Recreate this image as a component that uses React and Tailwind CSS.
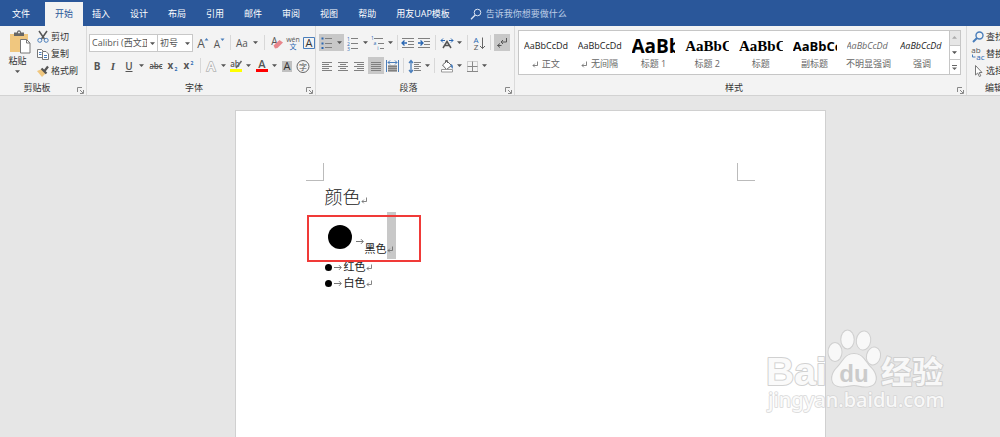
import React from "react";

const TABS = ["插入", "设计", "布局", "引用", "邮件", "审阅", "视图", "帮助", "用友UAP模板"];

const STYLES = [
  { name: "正文", mark: true, sample: "text-[9px] text-[#222]" },
  { name: "无间隔", mark: true, sample: "text-[9px] text-[#222]" },
  { name: "标题 1", sample: "text-[19px] font-bold text-black" },
  { name: "标题 2", sample: "text-[15px] font-bold text-black font-['Liberation_Serif',serif]" },
  { name: "标题", sample: "text-[15px] font-bold text-black font-['Liberation_Serif',serif]" },
  { name: "副标题", sample: "text-[13px] font-bold text-black" },
  { name: "不明显强调", sample: "text-[9px] italic text-[#666]" },
  { name: "强调", sample: "text-[9px] italic text-[#222]" },
];

function Caret({ className = "" }) {
  return (
    <svg viewBox="0 0 9 9" className={`w-[9px] h-[9px] shrink-0 ${className}`}>
      <path d="M2 3.300h5L4.500 6z" fill="#555" />
    </svg>
  );
}

function Icon({ children }) {
  return (
    <svg viewBox="0 0 16 16" className="w-4 h-4 shrink-0" fill="none">
      {children}
    </svg>
  );
}

function Tool({ label, caret, active, className = "", children }) {
  return (
    <button
      aria-label={label}
      className={`flex items-center h-[17px] shrink-0 ${active ? "bg-[#c8c8c8]" : ""} ${className}`}
    >
      <Icon>{children}</Icon>
      {caret && <Caret />}
    </button>
  );
}

function Sep({ className = "" }) {
  return <span className={`w-px h-[15px] bg-[#d8d8d8] shrink-0 ${className}`} />;
}

function Launcher() {
  return (
    <svg viewBox="0 0 7 7" className="w-[7px] h-[7px]" fill="none" stroke="#888">
      <path d="M.5 5V.5H5M3 3l3 3M6.5 3v3.5H3" />
    </svg>
  );
}

function Group({ title, launcher, className = "", titleClass = "", children }) {
  return (
    <section className={`flex flex-col h-[69px] border-r border-[#dadada] ${className}`}>
      <div className="flex-1">{children}</div>
      <div className="relative h-3 mb-px leading-3 text-center text-[#333]">
        <span className={titleClass}>{title}</span>
        {launcher && (
          <button aria-label={`${title}选项`} className="absolute right-[2px] bottom-0">
            <Launcher />
          </button>
        )}
      </div>
    </section>
  );
}

// horizontal rules, each one as [x1, x2, y]
function Rules({ rows, color = "#808080" }) {
  return <path d={rows.map(([a, b, y]) => `M${a} ${y}H${b}`).join("")} stroke={color} />;
}

function Letter({ x = 8, y = 12, size = 12, fill = "#555", children, ...rest }) {
  return (
    <text x={x} y={y} fontSize={size} fill={fill} textAnchor="middle" {...rest}>
      {children}
    </text>
  );
}

function TopTabs() {
  return (
    <header className="flex items-end h-[26px] bg-[#2a579a] text-white overflow-hidden">
      <button className="w-11 h-6 pr-[2px] shrink-0">文件</button>
      <button className="h-6 px-[10px] mx-px -mr-px shrink-0 bg-[#f3f3f3] text-[#2a579a]">开始</button>
      {TABS.map((tab) => (
        <button key={tab} className="h-6 px-[10px] shrink-0">
          {tab}
        </button>
      ))}
      <label className="flex items-center flex-1 h-6 gap-1 pl-[10px]">
        <svg viewBox="0 0 12 12" className="w-3 h-3 shrink-0" fill="none" stroke="#dbe4f2">
          <circle cx="7.500" cy="4.500" r="3.300" />
          <path d="M5.200 7L1 11.200" strokeWidth="1.300" />
        </svg>
        <input
          aria-label="告诉我你想要做什么"
          placeholder="告诉我你想要做什么"
          className="flex-1 min-w-0 bg-transparent outline-none placeholder:text-[#bdcde6]"
        />
      </label>
    </header>
  );
}

function Clipboard() {
  return (
    <Group title="剪贴板" launcher titleClass="pr-5" className="w-[87px] shrink-0 pl-2">
      <div className="flex pt-[2px]">
        <button className="flex flex-col items-center w-[23px] mt-px mr-1">
          <svg viewBox="0 0 23 25" className="w-[23px] h-[25px]" fill="none">
            <path d="M2 5h18v18H2z" fill="#f0c77f" />
            <path d="M6 3.500h3c0-3 4-3 4 0h3V7H6z" fill="#666" />
            <path d="M10.200 2.800h1.600v1.400h-1.600z" fill="#fff" />
            <path d="M12.500 10.500h6l3.500 3.500v10h-9.500z" fill="#fff" stroke="#777" />
            <path d="M18.500 10.500V14h3.500" stroke="#777" />
          </svg>
          <span className="mt-px mr-1 leading-3">粘贴</span>
          <Caret className="mr-1" />
        </button>
        <div className="flex flex-col">
          <button className="flex items-center h-[17px]">
            <Icon>
              <path d="M4 2l5.500 8M12 2L6.500 10" stroke="#555" strokeWidth="1.500" />
              <circle cx="4.800" cy="11.300" r="2" stroke="#4a7ebb" />
              <circle cx="11.200" cy="11.300" r="2" stroke="#4a7ebb" />
            </Icon>
            剪切
          </button>
          <button className="flex items-center h-[17px]">
            <Icon>
              <path d="M2.500 3.500h4l2 2v6h-6z" fill="#fff" stroke="#777" />
              <path d="M7.500 5.500h3.500l2.500 2.500v5.500h-6z" fill="#fff" stroke="#777" />
              <path d="M4 6.500h2.500M4 8.500h2.500M9 9.500h3M9 11.500h3" stroke="#4a7ebb" />
            </Icon>
            复制
          </button>
          <button className="flex items-center h-[17px]">
            <Icon>
              <path d="M2 8l5-2 4 4-4 4z" fill="#f0c77f" />
              <path d="M6.500 5.500l5 5M9.500 8L13 3.500" stroke="#555" strokeWidth="2.200" />
            </Icon>
            格式刷
          </button>
        </div>
      </div>
    </Group>
  );
}

function Combo({ label, value, className }) {
  return (
    <div className={`relative h-[18px] border border-[#c8c8c8] bg-white ${className}`}>
      <select
        aria-label={label}
        className="block w-full h-4 pl-[2px] pr-[10px] overflow-hidden appearance-none outline-none whitespace-nowrap text-[#555]"
      >
        <option>{value}</option>
      </select>
      <Caret className="absolute right-0 top-1 pointer-events-none" />
    </div>
  );
}

function FontGroup() {
  return (
    <Group title="字体" launcher titleClass="pr-4" className="w-[229px] shrink-0 pl-[2px]">
      <div className="flex items-center h-[17px] mt-2">
        <Combo label="字体" value="Calibri (西文正文)" className="w-[69px] shrink-0" />
        <Combo label="字号" value="初号" className="w-9 -ml-px mr-px shrink-0" />
        <Tool label="增大字号">
          <Letter x={7} y={13} size={12}>A</Letter>
          <path d="M10.500 5.500L12.500 3l2 2.500z" fill="#4a7ebb" />
        </Tool>
        <Tool label="减小字号">
          <Letter x={7} y={13} size={10}>A</Letter>
          <path d="M10.500 3.500h4l-2 2.500z" fill="#4a7ebb" />
        </Tool>
        <Sep className="mx-1" />
        <Tool label="更改大小写" caret>
          <Letter x={7} y={12} size={10}>Aa</Letter>
        </Tool>
        <Sep className="mx-1" />
        <Tool label="清除格式">
          <Letter x={5.500} y={10} size={10}>A</Letter>
          <path d="M4.500 10.500l6-5.500 3.500 2.500-5.500 5.500-2.500.500z" fill="#e8868c" />
        </Tool>
        <Tool label="拼音指南">
          <Letter y={7} size={7}>wén</Letter>
          <Letter y={14} size={7} fill="#2a67b2">文</Letter>
        </Tool>
        <Tool label="字符边框">
          <path d="M2.500 2.500h11v11h-11z" stroke="#4a7ebb" />
          <Letter y={12} size={11} fill="#333">A</Letter>
        </Tool>
      </div>
      <div className="flex items-center h-[17px] mt-[6px]">
        <Tool label="加粗">
          <Letter y={11.500} size={10} fontWeight="700">B</Letter>
        </Tool>
        <Tool label="倾斜">
          <Letter y={11.500} size={11} fontStyle="italic" fontWeight="600" fontFamily="Liberation Serif">I</Letter>
        </Tool>
        <Tool label="下划线" caret>
          <Letter y={11.500} size={10} fontWeight="600">U</Letter>
          <path d="M4.500 13.500h7" stroke="#555" />
        </Tool>
        <Tool label="删除线" className="ml-[2px]">
          <Letter y={11} size={8} fontWeight="600">abc</Letter>
          <path d="M2 8.500h12" stroke="#555" />
        </Tool>
        <Tool label="下标">
          <Letter x={6.500} y={11} size={10} fontWeight="700">x</Letter>
          <Letter x={12} y={13} size={5} fill="#2a67b2" fontWeight="700">2</Letter>
        </Tool>
        <Tool label="上标">
          <Letter x={6.500} y={11} size={10} fontWeight="700">x</Letter>
          <Letter x={12} y={7} size={5} fill="#2a67b2" fontWeight="700">2</Letter>
        </Tool>
        <Sep className="ml-1 mr-[2px]" />
        <Tool label="文本效果" caret>
          <text x="8" y="13" fontSize="13" textAnchor="middle" fill="#f8f8f8" stroke="#b4b4b4" strokeWidth="1.600" paintOrder="stroke" fontWeight="600">
            A
          </text>
        </Tool>
        <Tool label="突出显示" caret>
          <Letter x={7} y={9} size={8} fontWeight="600">ab</Letter>
          <path d="M13.500 3L8 10" stroke="#666" strokeWidth="1.500" />
          <path d="M2 11h12v3H2z" fill="#ff0" />
        </Tool>
        <Tool label="字体颜色" caret className="ml-px">
          <Letter y={10} size={11} fontWeight="600">A</Letter>
          <path d="M2 11h12v3H2z" fill="#f00" />
        </Tool>
        <Tool label="字符底纹">
          <path d="M3 3h10v11H3z" fill="#c0c0c0" />
          <Letter y={12} size={11} fill="#333">A</Letter>
        </Tool>
        <Tool label="带圈字符">
          <circle cx="8" cy="8.500" r="6" stroke="#666" />
          <Letter y={11.500} size={8}>字</Letter>
        </Tool>
      </div>
    </Group>
  );
}

function ParagraphGroup() {
  return (
    <Group title="段落" launcher titleClass="pr-4" className="w-[199px] shrink-0 pl-[3px]">
      <div className="flex items-center h-[17px] mt-2">
        <Tool label="项目符号" caret active>
          <path d="M2.500 2.500h2v2h-2zM2.500 7.500h2v2h-2zM2.500 12h2v2h-2z" fill="#2a67b2" />
          <Rules rows={[[6, 13, 3.5], [6, 13, 8.5], [6, 13, 12.5]]} />
        </Tool>
        <Tool label="编号" caret className="ml-px">
          <Letter x={3.500} y={5.500} size={5} fill="#2a67b2">1</Letter>
          <Letter x={3.500} y={10.500} size={5} fill="#2a67b2">2</Letter>
          <Letter x={3.500} y={15.500} size={5} fill="#2a67b2">3</Letter>
          <Rules rows={[[6, 13, 3.5], [6, 13, 8.5], [6, 13, 13.5]]} />
        </Tool>
        <Tool label="多级列表" caret>
          <Letter x={2.500} y={5} size={5} fill="#2a67b2">1</Letter>
          <Letter x={5} y={10} size={5} fill="#2a67b2">a</Letter>
          <Letter x={8} y={15} size={5} fill="#2a67b2">i</Letter>
          <Rules rows={[[4, 13, 3.5], [8, 14, 8.5], [10, 14, 13.5]]} />
        </Tool>
        <Sep className="mx-[2px]" />
        <Tool label="减少缩进量">
          <Rules rows={[[2, 14, 3.5], [8, 14, 6.5], [8, 14, 9.5], [2, 14, 12.5]]} />
          <path d="M7 8H2.500M4.500 5.500L2 8l2.500 2.500" stroke="#2a67b2" strokeWidth="1.300" />
        </Tool>
        <Tool label="增加缩进量">
          <Rules rows={[[2, 14, 3.5], [8, 14, 6.5], [8, 14, 9.5], [2, 14, 12.5]]} />
          <path d="M2 8h4.500M4.500 5.500L7 8l-2.500 2.500" stroke="#2a67b2" strokeWidth="1.300" />
        </Tool>
        <Sep className="mx-[3px]" />
        <Tool label="中文版式" caret>
          <path d="M4 13l4-6.500 4 6.500M5.500 10.500h5" stroke="#555" strokeWidth="1.500" />
          <path d="M2 5.500h4M4 3.500L2 5.500l2 2M10 5.500h4M12 3.500l2 2-2 2" stroke="#2a67b2" />
        </Tool>
        <Sep className="mx-[3px]" />
        <Tool label="排序">
          <Letter x={5} y={8} size={8} fill="#2a67b2">A</Letter>
          <Letter x={5} y={15} size={8}>Z</Letter>
          <path d="M11.500 2.500v11M9 11l2.500 2.500L14 11" stroke="#666" />
        </Tool>
        <Sep className="mx-[3px]" />
        <Tool label="显示编辑标记" active>
          <path d="M12.500 3v4H7M9 5L7 7l2 2M3.500 10.500h4M6 8.500l-2.500 2 2.500 2" stroke="#555" />
        </Tool>
      </div>
      <div className="flex items-center h-[17px] mt-[6px]">
        <Tool label="左对齐">
          <Rules rows={[[3, 13, 4.5], [3, 10, 6.5], [3, 13, 8.5], [3, 10, 10.5], [3, 13, 12.5]]} />
        </Tool>
        <Tool label="居中">
          <Rules rows={[[3, 13, 4.5], [5, 11, 6.5], [3, 13, 8.5], [5, 11, 10.5], [3, 13, 12.5]]} />
        </Tool>
        <Tool label="右对齐">
          <Rules rows={[[3, 13, 4.5], [6, 13, 6.5], [3, 13, 8.5], [6, 13, 10.5], [3, 13, 12.5]]} />
        </Tool>
        <Tool label="两端对齐" active className="ml-px">
          <Rules rows={[[3, 13, 4.5], [3, 13, 6.5], [3, 13, 8.5], [3, 13, 10.5], [3, 13, 12.5]]} />
        </Tool>
        <Tool label="分散对齐">
          <path d="M4 7h9v7H4z" fill="#aaa" />
          <Rules rows={[[4, 13, 8.5], [4, 13, 10.5], [4, 13, 12.5]]} />
          <path d="M2.500 2v12M14.500 2v12M4 4.500h9M6 2.500l-2 2 2 2M11 2.500l2 2-2 2" stroke="#4a7ebb" />
        </Tool>
        <Sep className="mx-[3px]" />
        <Tool label="行距" caret>
          <path d="M4 3v11M2 5l2-2.500L6 5M2 12l2 2.500L6 12" stroke="#4a7ebb" strokeWidth="1.300" />
          <Rules rows={[[7, 14, 4.5], [7, 12, 6.5], [7, 14, 8.5], [7, 12, 10.5], [7, 14, 12.5]]} />
        </Tool>
        <Sep className="ml-[2px] mr-1" />
        <Tool label="底纹" caret>
          <path d="M3.500 7l4.500-4 4.500 4.500-5 4z" fill="#fff" stroke="#666" />
          <path d="M6.500 5V2.500h2V5" stroke="#666" />
          <path d="M12 6c2 1 2.500 2.500 1.500 5L11.500 8z" fill="#4a7ebb" />
          <path d="M2.500 11.500h11v2.500h-11z" fill="#fff" stroke="#999" />
        </Tool>
        <Tool label="边框" caret>
          <path d="M3.500 3.500h10v10h-10z" stroke="#aaa" strokeDasharray="1 1" />
          <path d="M3.500 8.500h10M8.500 3.500v10M3 13.500h11" stroke="#888" />
        </Tool>
      </div>
    </Group>
  );
}

function StylesGroup() {
  return (
    <Group title="样式" launcher titleClass="pr-4" className="flex-1 min-w-0 pl-[3px]">
      <div className="flex h-[45px] mt-1 mr-[5px] border border-[#c6c6c6] bg-white">
        <div className="grid flex-1 min-w-0 grid-cols-8">
          {STYLES.map((s) => (
            <button key={s.name} className="flex flex-col min-w-0 px-[5px] pt-1 text-left">
              <span className={`block w-full h-[22px] overflow-hidden leading-[22px] whitespace-nowrap ${s.sample}`}>
                AaBbCcDd
              </span>
              <span className="flex items-center self-center h-3 gap-1 mt-px leading-3 whitespace-nowrap text-[#666]">
                {s.mark && <ReturnMark />}
                {s.name}
              </span>
            </button>
          ))}
        </div>
        <div className="flex flex-col w-[11px] border-l border-[#c6c6c6]">
          <button aria-label="上一行" className="flex items-center flex-1 bg-[#e6e6e6]">
            <Caret className="rotate-180 opacity-40" />
          </button>
          <button aria-label="下一行" className="flex items-center flex-1 border-[#c6c6c6] border-y">
            <Caret />
          </button>
          <button aria-label="其他" className="flex items-center flex-1">
            <svg viewBox="0 0 9 9" className="w-[9px] h-[9px]">
              <path d="M2 2h5v1H2zM2 4.500h5L4.500 7z" fill="#666" />
            </svg>
          </button>
        </div>
      </div>
    </Group>
  );
}

function EditingGroup() {
  return (
    <div className="w-[33px] shrink-0 overflow-hidden">
      <Group title="编辑" className="w-[52px] pl-[3px]">
        <div className="flex flex-col pt-[2px]">
          <button className="flex items-center h-[17px] whitespace-nowrap">
            <Icon>
              <circle cx="9.500" cy="6.500" r="3.500" stroke="#4a7ebb" strokeWidth="1.400" />
              <path d="M7 9l-4 4" stroke="#4a7ebb" strokeWidth="2" />
            </Icon>
            查找
          </button>
          <button className="flex items-center h-[17px] whitespace-nowrap">
            <Icon>
              <Letter x={6} y={7} size={8}>ab</Letter>
              <Letter x={10.500} y={14} size={8} fill="#2a67b2">ac</Letter>
              <path d="M2.500 8.500v2.500h3" stroke="#4a7ebb" />
            </Icon>
            替换
          </button>
          <button className="flex items-center h-[17px] whitespace-nowrap">
            <Icon>
              <path d="M5.500 2.500v9.500l2.200-2 1.600 3.500 1.500-.700-1.600-3.300h2.800z" fill="#fff" stroke="#777" />
            </Icon>
            选择
          </button>
        </div>
      </Group>
    </div>
  );
}

function ReturnMark() {
  return (
    <svg viewBox="0 0 6 7" className="w-[6px] h-[7px] shrink-0" fill="none" stroke="#666" strokeWidth=".8">
      <path d="M5.500.500V4.500H1M2.800 2.700L1 4.500l1.800 1.800" />
    </svg>
  );
}

function TabMark({ className = "" }) {
  return (
    <svg viewBox="0 0 8 7" className={`w-2 h-[7px] shrink-0 ${className}`} fill="none" stroke="#777">
      <path d="M0 3.500h7M5 1.200l2.300 2.300L5 5.800" />
    </svg>
  );
}

function Page() {
  return (
    <article className="w-[591px] border border-b-0 border-[#d0d0d0] bg-white pt-[52px]">
      <div className="flex justify-between px-[70px]">
        <span className="w-[18px] h-[18px] border-r border-b border-[#bbb]" />
        <span className="w-[18px] h-[18px] border-l border-b border-[#bbb]" />
      </div>
      <div className="pl-[89px] text-[11px] text-[#222]">
        <h1 className="flex items-center h-7 mt-px text-[18px] font-light text-[#222] font-['Noto_Sans_CJK_SC',sans-serif]">
          颜色
          <span className="pt-2">
            <ReturnMark />
          </span>
        </h1>
        <ul className="mt-[2px]">
          <li className="relative flex items-start h-[47px]">
            <span className="w-6 h-6 ml-[3px] mt-[13px] rounded-full bg-black" />
            <TabMark className="ml-1 mt-[26px]" />
            <span className="ml-px mt-[29px] leading-4">黑色</span>
            <span className="flex items-end w-[9px] h-full pb-[6px] bg-[#c8c8c8]">
              <ReturnMark />
            </span>
            <span className="absolute -left-[18px] top-[3px] w-[114px] h-[47px] border-2 border-[#f03a38]" />
          </li>
          {["红色", "白色"].map((item) => (
            <li key={item} className="flex items-center h-4">
              <span className="w-[7px] h-[7px] mr-[2px] rounded-full bg-black" />
              <TabMark className="mr-[2px]" />
              {item}
              <ReturnMark />
            </li>
          ))}
        </ul>
      </div>
    </article>
  );
}

function Watermark() {
  const paint = { fill: "#fafafa", stroke: "#cdcdcd", strokeWidth: 2, paintOrder: "stroke", strokeLinejoin: "round" };
  return (
    <svg
      viewBox="0 0 184 94"
      className="absolute right-[52px] bottom-[15px] w-[184px] h-[94px] opacity-90 pointer-events-none"
    >
      <g {...paint}>
        <text x="2" y="57" fontSize="39" fontWeight="700" fontFamily="Liberation Sans">Bai</text>
        <ellipse cx="71" cy="24" rx="6.500" ry="9" />
        <ellipse cx="83.500" cy="11.500" rx="6.200" ry="9" />
        <ellipse cx="99.500" cy="12.500" rx="6.700" ry="9" transform="rotate(8 99.500 12.500)" />
        <ellipse cx="109.500" cy="28" rx="6.500" ry="8.500" transform="rotate(14 109.500 28)" />
        <path d="M90 26C99 26 101 34 107 40C114 47 114 58 103 58.500C98 59 94 57 90 57S81 59 77 58.500C66 58 66 47 73 40C79 34 81 26 90 26Z" />
        <text x="117" y="55" fontSize="31" fontWeight="700" fontFamily="Noto Sans CJK SC">经验</text>
        <text x="4" y="79" fontSize="20" fontWeight="500" strokeWidth="1.500" stroke="#d4d4d4" fontFamily="Noto Sans">jingyan.baidu.com</text>
      </g>
      <text x="90" y="54" fontSize="24" fontWeight="700" fontFamily="Liberation Sans" textAnchor="middle" fill="#c9c9c9">
        du
      </text>
    </svg>
  );
}

export default function App() {
  return (
    <div className="relative flex flex-col min-h-screen overflow-hidden bg-[#e6e6e6] text-[9px] text-[#333] font-['Open_Sans','Noto_Sans_CJK_SC',sans-serif]">
      <TopTabs />
      <nav className="flex h-[70px] border-b border-[#d2d2d2] bg-[#f3f3f3] overflow-hidden">
        <Clipboard />
        <FontGroup />
        <ParagraphGroup />
        <StylesGroup />
        <EditingGroup />
      </nav>
      <main className="flex justify-center flex-1 pl-[60px] pt-[14px]">
        <Page />
      </main>
      <Watermark />
    </div>
  );
}
